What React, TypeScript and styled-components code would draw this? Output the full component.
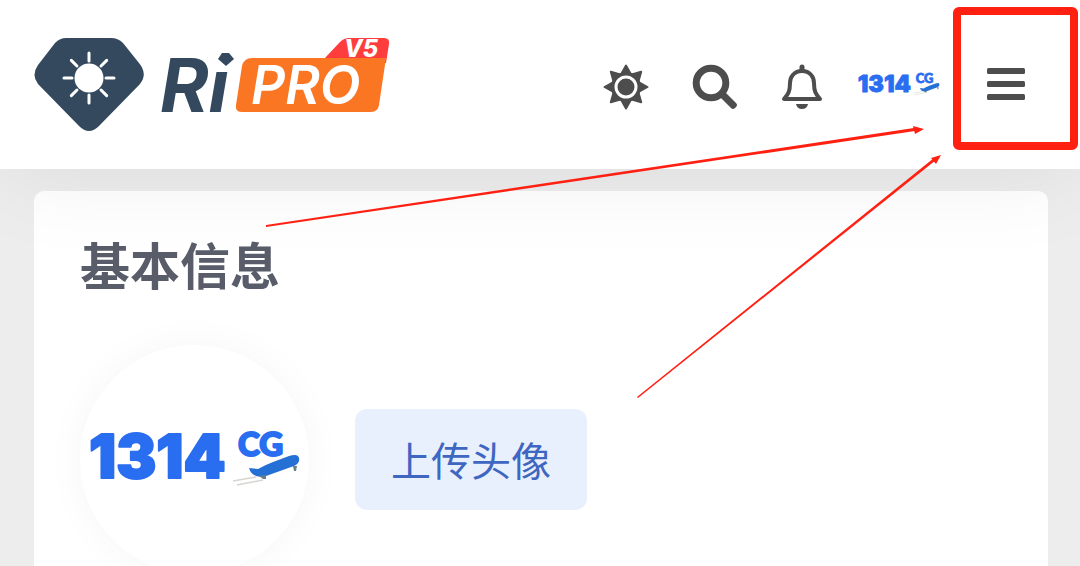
import React from "react";
import styled, { createGlobalStyle } from "styled-components";

const GlobalStyle = createGlobalStyle`
  *, *::before, *::after { box-sizing: border-box; }
  body {
    margin: 0;
    background: #ededed;
    color: #595d69;
    font-family: Roboto, "Noto Sans CJK SC", sans-serif;
  }
`;

const Page = styled.div`
  position: relative;
  min-height: 100vh;
`;

const Header = styled.header`
  position: relative;
  z-index: 1;
  display: flex;
  align-items: center;
  justify-content: space-between;
  padding: 32px 55px 32px 32px;
  background: #fff;
  box-shadow: 0 0 100px rgba(0, 0, 0, 0.08);
`;

const BrandLink = styled.a`
  display: block;
  height: 105px;
`;

const Actions = styled.nav`
  display: flex;
  align-items: center;
`;

const Tools = styled.div`
  display: flex;
  align-items: center;
  gap: 42px;
  padding-top: 4px;
`;

const IconButton = styled.button`
  display: block;
  padding: 0;
  border: 0;
  background: none;
  color: #4d4d4d;
  cursor: pointer;

  svg { display: block; }
`;

const ProfileLink = styled.a`
  display: block;
  margin: 0 46px 0 34px;

  svg { display: block; }
`;

const Content = styled.main`
  padding: 22px 32px 0 34px;
`;

const Card = styled.section`
  padding: 40px 46px;
  border-radius: 10px;
  background: #fff;
`;

const Title = styled.h1`
  margin: 0;
  font-size: 50px;
  line-height: 74px;
  font-weight: 700;
`;

const AvatarRow = styled.div`
  display: flex;
  align-items: center;
  gap: 46px;
  margin-top: 40px;
`;

const Avatar = styled.div`
  display: grid;
  place-items: center;
  width: 229px;
  height: 229px;
  border-radius: 50%;
  background: #fff;
  box-shadow: 0 0 40px rgba(0, 0, 0, 0.04);
`;

const UploadButton = styled.button`
  padding: 23px 36px 17px;
  border: 0;
  border-radius: 12px;
  background: #e8effd;
  color: #3f66c0;
  font: 400 40px/61px Roboto, "Noto Sans CJK SC", sans-serif;
  cursor: pointer;
`;

const Drawing = styled.svg`
  overflow: visible;
`;

const Annotation = styled.svg`
  position: absolute;
  z-index: 2;
  top: 0;
  right: 0;
  pointer-events: none;
`;

const rays = [0, 45, 90, 135, 180, 225, 270, 315];

function BrandLogo() {
  return (
    <Drawing width="364" height="105" viewBox="32 32 364 105" role="img" aria-label="RiPRO V5">
      <path
        d="M66 38H111Q118 38 123 43L139 63Q148 74 140 84L99 126Q89 136 79 126L38 84Q31 75 38 65L55 43Q60 38 66 38Z"
        fill="#34495e"
      />
      <circle cx="89" cy="78" r="14.5" fill="#fff" />
      {rays.map((angle) => (
        <path
          key={angle}
          d="M89 61V53"
          stroke="#fff"
          strokeWidth="3"
          strokeLinecap="round"
          transform={`rotate(${angle} 89 78)`}
        />
      ))}
      <text x="160" y="112" fill="#34495e" fontFamily="Inter" fontSize="74" fontWeight="700" fontStyle="italic">
        Ri
      </text>
      <path d="M213 46H244V69H213Z" fill="#fff" />
      <path d="M222 53H229L234 59L226 66L218 59Z" fill="#34495e" />
      <path d="M324 59L340 42Q344 38 349 38H384Q390 38 389 44L386 63H324Z" fill="#ff3d3d" />
      <path d="M252 58H386L379 105Q378 112 371 112H242Q235 112 236 105L242 66Q244 58 252 58Z" fill="#fa7623" />
      <text x="251" y="104" fill="#fff" fontFamily="Inter" fontSize="53" fontWeight="600" fontStyle="italic">
        PRO
      </text>
      <text x="344" y="57" fill="#fff" fontFamily="Inter" fontSize="24" fontWeight="800" fontStyle="italic">
        V5
      </text>
    </Drawing>
  );
}

function StudioMark({ width, height }: { width: number; height: number }) {
  return (
    <Drawing width={width} height={height} viewBox="0 0 216 66" role="img" aria-label="1314 CG">
      <g fill="#296df0" stroke="#296df0" strokeLinejoin="round">
        <text x="2" y="51" fontFamily="Inter" fontSize="60" fontWeight="900" strokeWidth="2">
          1314
        </text>
        <text x="151" y="29" fontFamily="Lato" fontSize="33" fontWeight="900" strokeWidth="2">
          CG
        </text>
      </g>
      <path d="M162 41L171 42Q178 38 186 35L202 29Q211 26 212 31Q213 36 207 39L179 49Q165 52 162 41Z" fill="#2470d5" />
      <path d="M172 49L179 48V52H176ZM206 39H210L209 44H207Z" fill="#657f8b" />
      <path d="M146 54L169 50M150 58L176 53" fill="none" stroke="#d5d5d2" strokeWidth="1.5" />
    </Drawing>
  );
}

function SunIcon() {
  return (
    <svg width="46" height="46" viewBox="0 0 46 46" aria-hidden="true">
      <g fill="currentColor" stroke="currentColor" strokeWidth="2" strokeLinejoin="round">
        {rays.map((angle) => (
          <path key={angle} d="M23 1.500L30 14H16Z" transform={`rotate(${angle} 23 23)`} />
        ))}
        <circle cx="23" cy="23" r="14" />
      </g>
      <circle cx="23" cy="23" r="10" fill="currentColor" stroke="#fff" strokeWidth="3" />
    </svg>
  );
}

function SearchIcon() {
  return (
    <svg width="48" height="48" viewBox="0 0 48 48" aria-hidden="true">
      <circle cx="20" cy="20" r="14.8" fill="none" stroke="currentColor" strokeWidth="7" />
      <path d="M29 34L34 29L45 40Q47 42 45 44L44 45Q42 47 40 45Z" fill="currentColor" />
    </svg>
  );
}

function BellIcon() {
  return (
    <svg width="42" height="48" viewBox="0 0 42 48" aria-hidden="true">
      <path
        d="M21 8C13 8 9 14 9 20C9 29 7 31 3 36H39C35 31 33 29 33 20C33 14 29 8 21 8Z"
        fill="none"
        stroke="currentColor"
        strokeWidth="4"
        strokeLinejoin="round"
      />
      <path d="M21 4V7" stroke="currentColor" strokeWidth="5" strokeLinecap="round" />
      <path d="M15 41H27Q26 46 21 46Q16 46 15 41Z" fill="currentColor" />
    </svg>
  );
}

function MenuIcon() {
  return (
    <svg width="38" height="36" viewBox="0 0 38 36" aria-hidden="true">
      <g fill="currentColor">
        <rect y="1" width="38" height="6" rx="1.500" />
        <rect y="14" width="38" height="6" rx="1.500" />
        <rect y="27" width="38" height="6" rx="1.500" />
      </g>
    </svg>
  );
}

export default function App() {
  return (
    <Page>
      <GlobalStyle />
      <Header>
        <BrandLink href="#"><BrandLogo /></BrandLink>
        <Actions>
          <Tools>
            <IconButton aria-label="切换主题"><SunIcon /></IconButton>
            <IconButton aria-label="搜索"><SearchIcon /></IconButton>
            <IconButton aria-label="通知"><BellIcon /></IconButton>
          </Tools>
          <ProfileLink href="#"><StudioMark width={84} height={26} /></ProfileLink>
          <IconButton aria-label="菜单"><MenuIcon /></IconButton>
        </Actions>
      </Header>
      <Content>
        <Card>
          <Title>基本信息</Title>
          <AvatarRow>
            <Avatar><StudioMark width={216} height={66} /></Avatar>
            <UploadButton>上传头像</UploadButton>
          </AvatarRow>
        </Card>
      </Content>
      <Annotation width="820" height="402" viewBox="260 0 820 402" aria-hidden="true">
        <rect x="957" y="11" width="117" height="135" rx="2" fill="none" stroke="#ff2012" strokeWidth="8" />
        <g fill="#ff2012">
          <path d="M266 225L914 128L915 131L266 227Z" />
          <path d="M637 397L934 158L936 160L638 398Z" />
          <path d="M924 129L913 126L915 134ZM941 155L931 158L936 164Z" />
        </g>
      </Annotation>
    </Page>
  );
}
